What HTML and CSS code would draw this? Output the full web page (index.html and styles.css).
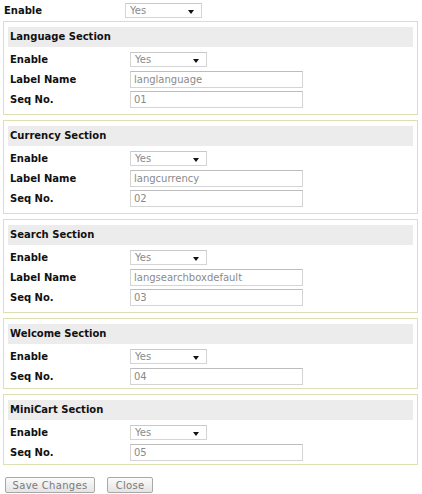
FILE: index.html
```html
<!DOCTYPE html>
<html>
<head>
<meta charset="utf-8">
<link rel="stylesheet" href="styles.css">
</head>
<body>
<div class="page">
  <div class="top-row">
    <span class="top-label">Enable</span>
    <div class="select"><span class="sel-text">Yes</span><span class="arrow"></span></div>
  </div>

  <div class="box">
    <div class="box-head">Language Section</div>
    <div class="row"><span class="label">Enable</span><div class="select"><span class="sel-text">Yes</span><span class="arrow"></span></div></div>
    <div class="row"><span class="label">Label Name</span><div class="input">langlanguage</div></div>
    <div class="row"><span class="label">Seq No.</span><div class="input">01</div></div>
  </div>

  <div class="box">
    <div class="box-head">Currency Section</div>
    <div class="row"><span class="label">Enable</span><div class="select"><span class="sel-text">Yes</span><span class="arrow"></span></div></div>
    <div class="row"><span class="label">Label Name</span><div class="input">langcurrency</div></div>
    <div class="row"><span class="label">Seq No.</span><div class="input">02</div></div>
  </div>

  <div class="box">
    <div class="box-head">Search Section</div>
    <div class="row"><span class="label">Enable</span><div class="select"><span class="sel-text">Yes</span><span class="arrow"></span></div></div>
    <div class="row"><span class="label">Label Name</span><div class="input">langsearchboxdefault</div></div>
    <div class="row"><span class="label">Seq No.</span><div class="input">03</div></div>
  </div>

  <div class="box box-short">
    <div class="box-head">Welcome Section</div>
    <div class="row"><span class="label">Enable</span><div class="select"><span class="sel-text">Yes</span><span class="arrow"></span></div></div>
    <div class="row"><span class="label">Seq No.</span><div class="input">04</div></div>
  </div>

  <div class="box box-short">
    <div class="box-head">MiniCart Section</div>
    <div class="row"><span class="label">Enable</span><div class="select"><span class="sel-text">Yes</span><span class="arrow"></span></div></div>
    <div class="row"><span class="label">Seq No.</span><div class="input">05</div></div>
  </div>

  <div class="buttons">
    <button class="btn btn-save">Save Changes</button>
    <button class="btn btn-close">Close</button>
  </div>
</div>
</body>
</html>
```

FILE: styles.css
```css
html, body {
  margin: 0;
  padding: 0;
  background: #ffffff;
}

.page {
  width: 422px;
  padding: 0 0 0 3px;
  box-sizing: border-box;
  font-family: "DejaVu Sans", Verdana, sans-serif;
  font-size: 10px;
}

.top-row {
  display: flex;
  align-items: center;
  height: 20px;
}

.top-label {
  width: 121px;
  padding-left: 1px;
  font-weight: bold;
  color: #111;
}

.select {
  position: relative;
  width: 75px;
  height: 13px;
  border: 1px solid #d4d4d4;
  border-top-color: #c8c8c8;
  background: #fff;
  display: flex;
  align-items: center;
  box-sizing: content-box;
}

.sel-text {
  padding-left: 4px;
  color: #8a8a8a;
  font-size: 10px;
}

.arrow {
  position: absolute;
  right: 7px;
  top: 6px;
  width: 0;
  height: 0;
  border-left: 3px solid transparent;
  border-right: 3px solid transparent;
  border-top: 4px solid #111;
}

.box {
  width: 415px;
  box-sizing: border-box;
  border: 1px solid #dde0b2;
  padding: 5px 4px 5px 4px;
  margin-top: 1px;
  margin-bottom: 5px;
}

.box-short {
  padding-bottom: 2px;
}

.box-head {
  height: 20px;
  line-height: 20px;
  background: #ececec;
  padding-left: 2px;
  font-weight: bold;
  color: #111;
  margin-bottom: 2px;
}

.row {
  display: flex;
  align-items: center;
  height: 20px;
  padding-left: 2px;
}

.label {
  width: 120px;
  font-weight: bold;
  color: #111;
}

.input {
  width: 168px;
  height: 15px;
  line-height: 15px;
  border: 1px solid #d4d4d4;
  border-top-color: #bdbdbd;
  padding-left: 3px;
  color: #8a8a8a;
  font-size: 10px;
  background: #fff;
}

.buttons {
  display: flex;
  gap: 12px;
  margin-top: 12px;
  padding-left: 2px;
}

.btn {
  font-family: "DejaVu Sans", Verdana, sans-serif;
  font-size: 10px;
  color: #7a7a7a;
  height: 16px;
  padding: 0;
  border: 1px solid #a8a8a8;
  border-radius: 2px;
  background: linear-gradient(#fbfbfb, #e4e4e4);
  letter-spacing: 0.3px;
}

.btn-save {
  width: 90px;
}

.btn-close {
  width: 46px;
}
```
